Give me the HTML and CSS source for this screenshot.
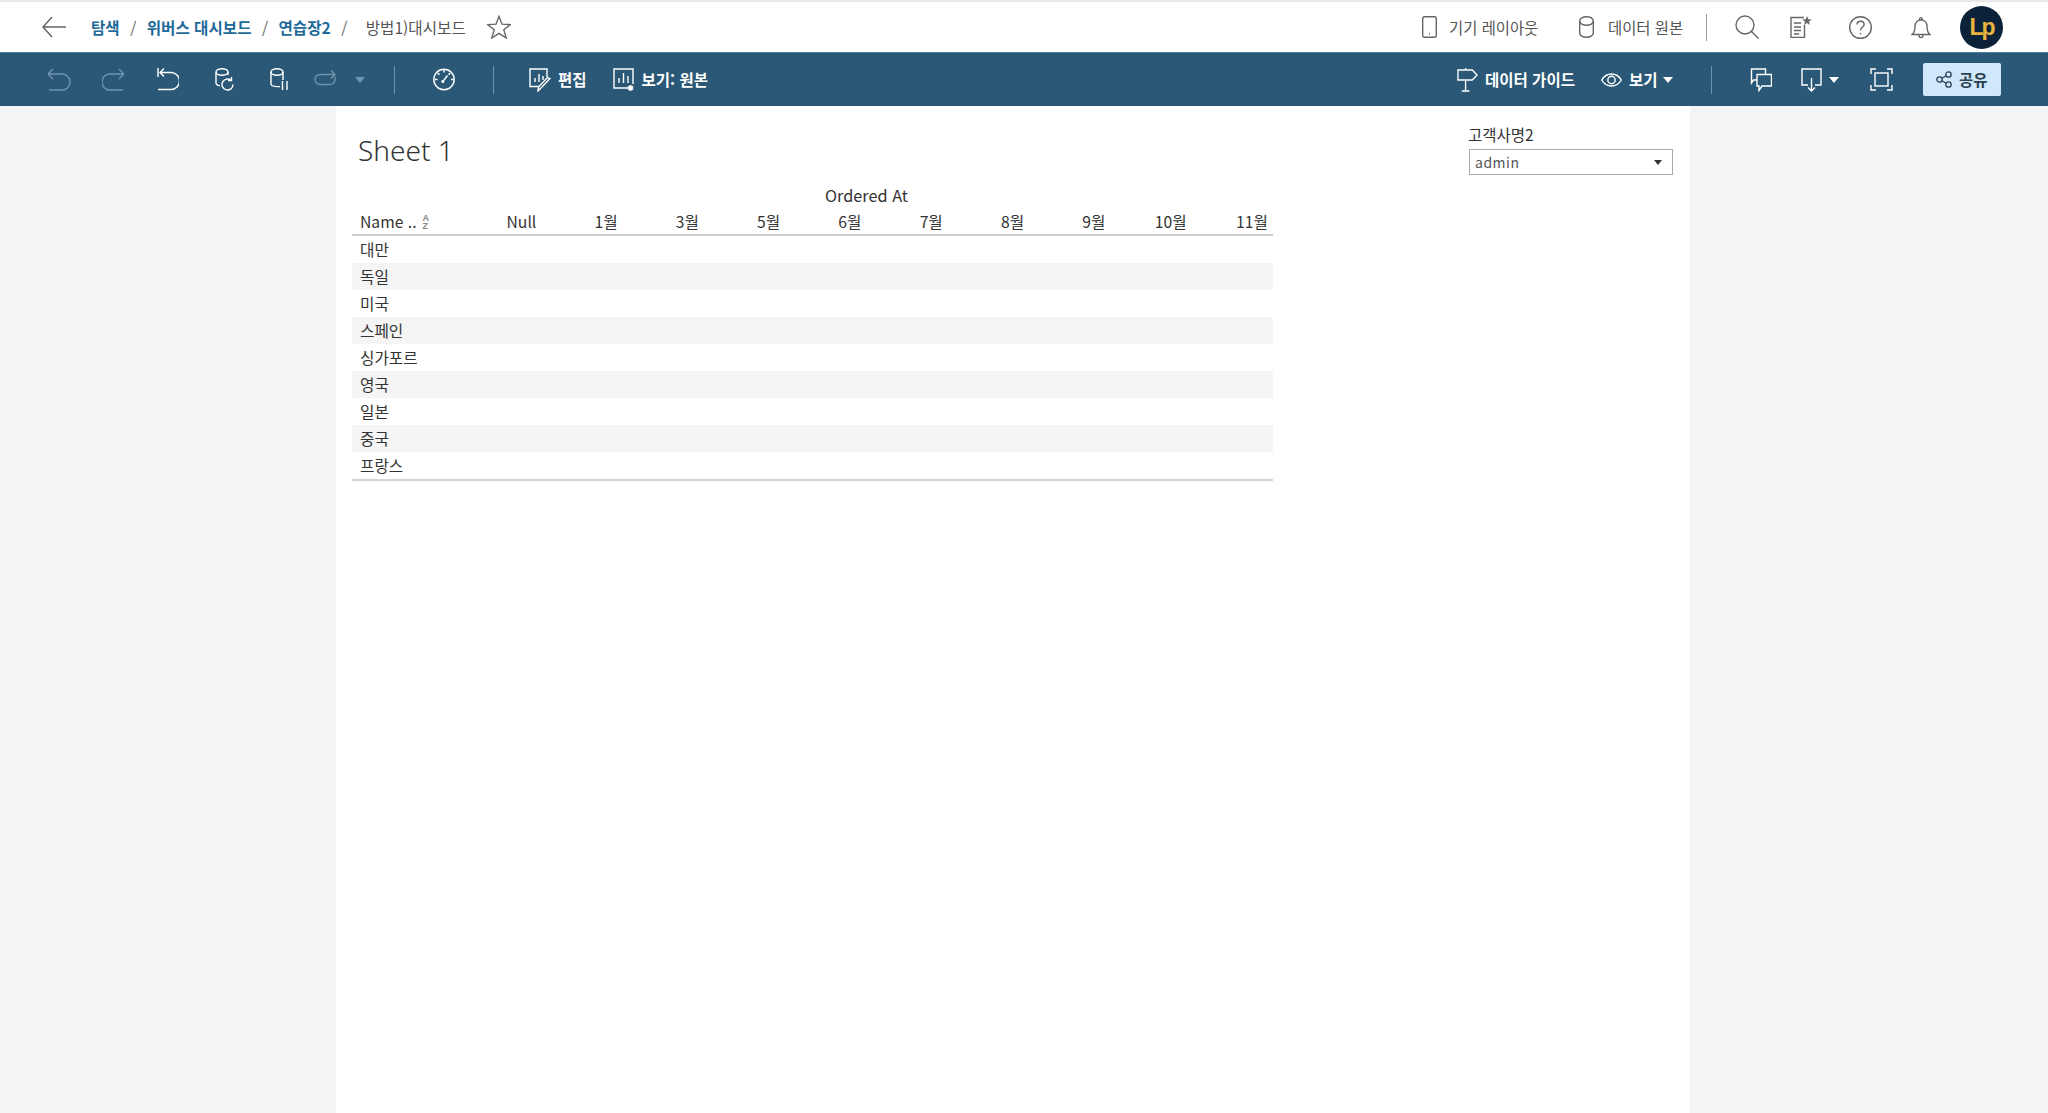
FILE: index.html
```html
<!DOCTYPE html>
<html lang="ko">
<head>
<meta charset="utf-8">
<title>방법1)대시보드</title>
<link rel="stylesheet" href="styles.css">
</head>
<body>
<header class="topbar">
  <svg class="ico arrow" width="24" height="24" viewBox="0 0 24 24"><path d="M24 12H1M10 2 1 12l9 10"/></svg>
  <nav class="crumbs">
    <a class="crumb">탐색</a><span class="slash">/</span>
    <a class="crumb">위버스 대시보드</a><span class="slash">/</span>
    <a class="crumb">연습장2</a><span class="slash">/</span>
    <span class="current">방법1)대시보드</span>
  </nav>
  <svg class="ico star" width="24" height="24" viewBox="0 0 24 26" preserveAspectRatio="none"><path d="M12 1.500l3 8.500 8.500.3-6.700 5.600 2.400 9-7.200-5-7.200 5 2.400-9L.5 10.300 9 10z"/></svg>
  <div class="top-right">
    <svg class="ico" width="15" height="22" viewBox="0 0 15 22"><rect x=".7" y=".7" width="13.600" height="20.600" rx="1.500"/><path d="M7 18h1"/></svg>
    <span class="top-label tl1">기기 레이아웃</span>
    <svg class="ico cyl" width="15" height="22" viewBox="0 0 15 22"><path d="M.7 5v12c0 2.400 3 4.300 6.800 4.300s6.800-1.900 6.800-4.300V5"/><ellipse cx="7.500" cy="5" rx="6.800" ry="4.300"/></svg>
    <span class="top-label tl2">데이터 원본</span>
    <i class="top-sep"></i>
    <svg class="ico search" width="24" height="24" viewBox="0 0 24 24"><circle cx="10" cy="10" r="9"/><path d="M16.500 16.500 23.500 23.500"/></svg>
    <svg class="ico doc" width="22" height="22" viewBox="0 0 22 22"><path d="M14 1.500H1v20h13.500V9M4 7h7M4 11h7M4 14.500h7M4 18h5"/><path class="fill" d="M17 0l1.300 3.200 3.400.2-2.700 2.200.9 3.300-2.900-1.900-2.900 1.900.9-3.300-2.700-2.200 3.400-.2z"/></svg>
    <svg class="ico help" width="23" height="23" viewBox="0 0 23 23"><circle cx="11.500" cy="11.500" r="10.800"/><path d="M8 8.500c0-2 1.600-3.300 3.600-3.300s3.500 1.300 3.500 3.200c0 2.900-3.600 2.800-3.600 6M11.500 17v1.500"/></svg>
    <svg class="ico bell" width="20" height="23" viewBox="0 0 20 23"><path d="M1 18.500c2.500-2 3-4 3-8 0-4 2.500-6.500 6-6.500s6 2.500 6 6.500c0 4 .5 6 3 8zM8.500 3.500C8.500 1 11.500 1 11.500 3.500M8 19c0 3.500 4 3.500 4 0"/></svg>
    <div class="avatar"><span class="avatar-text">Lp</span></div>
  </div>
</header>

<div class="toolbar">
  <svg class="wico dim m-undo" width="23" height="23" viewBox="0 0 23 23"><path d="M0 6h14a8 8 0 0 1 0 16H1M5 1 0 6l5 5"/></svg>
  <svg class="wico dim m-redo" width="22" height="23" viewBox="0 0 22 23"><path d="M22 6H8a8 8 0 0 0 0 16h13M17 1l5 5-5 5"/></svg>
  <svg class="wico m-rev" width="22" height="23" viewBox="0 0 22 23"><path d="M1 0v9M3 4.500h11a7.500 7.500 0 0 1 0 17H1M7 .5l-4 4 4 4"/></svg>
  <svg class="wico m-ref" width="19" height="23" viewBox="0 0 19 23"><path d="M1 4v11c0 1.500 2 2.500 4 2.700M13 4v3"/><ellipse cx="7" cy="4" rx="6" ry="3.200"/><path d="M18 16.500a5.500 5.500 0 1 1-2-4.200M16.500 9v3.500H13"/></svg>
  <svg class="wico m-pau" width="18" height="23" viewBox="0 0 18 23"><path d="M1 4v12c0 1.500 3 2.600 6 2.600h3M13 4v8"/><ellipse cx="7" cy="4" rx="6" ry="3.200"/><path d="M12.500 13v9M17 13v9"/></svg>
  <svg class="wico dim m-loop" width="22" height="23" viewBox="0 0 22 23"><path d="M21 8.500v3a5 5 0 0 1-5 5H6a5 5 0 0 1 0-10h15M17 2.500l4 4-4 4"/></svg>
  <span class="caret dimc m-car"></span>
  <i class="tsep m-s1"></i>
  <svg class="wico m-clock" width="22" height="23" viewBox="0 0 22 23"><circle cx="11" cy="11.500" r="10.200"/><path d="M11 2v2.500M2 11.500h2.500M18 11.500h2.500M4.700 5l1.800 1.800M17.300 5l-1.800 1.800M9.500 14l5-6.500"/><circle class="wfill" cx="9.800" cy="13.500" r="1.500"/></svg>
  <i class="tsep m-s2"></i>
  <svg class="wico m-edit" width="22" height="24" viewBox="0 0 22 24"><path d="M10 18.500H1V1h17v8M6 14v-4M10 14V6M14 12V8M21 10.500 12 20l-3 3 .5-4 9-9.500z"/></svg>
  <span class="tool-text m7">편집</span>
  <svg class="wico m-view" width="22" height="24" viewBox="0 0 22 24"><path d="M15 20H1V1h19v15M6 15v-5M10.500 15V5M15 15V8"/><path class="wstar" d="M17.500 17v6M14.800 18.500l5.400 3M20.200 18.500l-5.400 3"/></svg>
  <span class="tool-text m7">보기: 원본</span>

  <div class="tool-right">
    <svg class="wico" width="21" height="24" viewBox="0 0 22 24" preserveAspectRatio="none"><path d="M1 2h15l5 5-5 5H1zM9 12v11M5 23h8M9 0v2"/></svg>
    <span class="tool-text m7 tw1">데이터 가이드</span>
    <svg class="wico m-eye" width="21" height="14" viewBox="0 0 21 14"><path d="M.7 7C3 3 6.500 1 10.500 1s7.500 2 9.800 6c-2.300 4-5.800 6-9.800 6S3 11 .7 7z"/><circle cx="10.500" cy="7" r="3.700"/></svg>
    <span class="tool-text m7 tw2">보기</span>
    <span class="caret m-c2"></span>
    <i class="tsep m-s3"></i>
    <svg class="wico m-com" width="22" height="24" viewBox="0 0 22 24"><path d="M7 12H3.500L1.500 15V1h14v5"/><path d="M7 6.500h14.500V18H12l-3 4.500V18H7z"/></svg>
    <svg class="wico m-dl" width="21" height="24" viewBox="0 0 21 24"><path d="M7 17H1V1h19v16h-6M10.500 10v13M7 19.500l3.500 3.500 3.500-3.500"/></svg>
    <span class="caret m-c3"></span>
    <svg class="wico m-full" width="23" height="23" viewBox="0 0 23 23"><path d="M1 6V1h5M17 1h5v5M22 17v5h-5M6 22H1v-5"/><rect x="5" y="5" width="13" height="13"/></svg>
    <button class="share">
      <svg class="sico" width="16" height="17" viewBox="0 0 16 17"><circle cx="3.500" cy="8.500" r="2.700"/><circle cx="12.500" cy="3.500" r="2.700"/><circle cx="12.500" cy="13.500" r="2.700"/><path d="M6 7.200 10 4.800M6 9.800l4 2.400"/></svg>
      <span class="share-text">공유</span>
    </button>
  </div>
</div>

<main class="stage">
  <section class="canvas">
    <div class="sheet">
      <h1 class="title">Sheet 1</h1>
      <div class="table">
        <div class="axis-title">Ordered At</div>
        <div class="row head">
          <div class="name">Name .. <span class="sort"><span>A</span><span>Z</span></span></div>
          <div class="num">Null</div><div class="num">1월</div><div class="num">3월</div><div class="num">5월</div><div class="num">6월</div><div class="num">7월</div><div class="num">8월</div><div class="num">9월</div><div class="num">10월</div><div class="num">11월</div>
        </div>
        <div class="body">
          <div class="row">대만</div>
          <div class="row">독일</div>
          <div class="row">미국</div>
          <div class="row">스페인</div>
          <div class="row">싱가포르</div>
          <div class="row">영국</div>
          <div class="row">일본</div>
          <div class="row">중국</div>
          <div class="row">프랑스</div>
        </div>
      </div>
    </div>
    <aside class="filter">
      <div class="filter-label">고객사명2</div>
      <div class="select"><span>admin</span><span class="select-caret"></span></div>
    </aside>
  </section>
</main>
</body>
</html>
```
FILE: styles.css
```css
* { box-sizing: border-box; }
html, body { margin: 0; height: 1113px; overflow: hidden; }
body {
  display: flex;
  flex-direction: column;
  background: #f5f5f5;
  color: #333;
  font-family: "Noto Sans CJK KR", "Noto Sans", sans-serif;
}
svg { display: block; flex: none; }
.ico path, .ico rect, .ico circle, .ico ellipse { fill: none; stroke: #666; stroke-width: 1.4; }
.ico .fill { fill: #666; stroke: none; }
.wico path, .wico rect, .wico circle, .wico ellipse { fill: none; stroke: #fff; stroke-width: 1.4; }
.wico .wfill { fill: #fff; stroke: none; }
.wico .wstar { stroke-width: 1.800; }
.wico.dim path { stroke: #6f94ad; }

.topbar {
  height: 52px;
  flex: none;
  display: flex;
  align-items: center;
  padding: 0 45px 0 42px;
  background: #fff;
  border-top: 2px solid #e9e9e9;
}
.crumbs { display: flex; align-items: center; margin-left: 25px; padding-bottom: 1px; font-size: 15.600px; white-space: nowrap; }
.crumb { color: #1f6a99; font-weight: 700; }
.slash { color: #666; width: 27px; text-align: center; font-weight: 400; }
.current { color: #555; margin-left: 8px; }
.star { margin-left: 21px; }
.top-right { margin-left: auto; display: flex; align-items: center; }
.top-label { color: #555; font-size: 15.400px; margin-left: 12px; padding-bottom: 1px; white-space: nowrap; }
.tl1 { width: 88px; }
.tl2 { width: 73px; margin-left: 14px; }
.cyl { margin-left: 42px; }
.top-sep { width: 1px; height: 27px; background: #999; margin-left: 25px; }
.search { margin-left: 28px; }
.doc { margin-left: 31px; }
.help { margin-left: 37px; }
.bell { margin-left: 39px; }
.avatar {
  width: 43px; height: 43px; margin-left: 29px;
  border-radius: 50%;
  background: #0b2239;
  display: flex; align-items: center; justify-content: center;
}
.avatar-text { color: #e8b33d; font: 700 23px "Liberation Sans", sans-serif; letter-spacing: -2px; }

.toolbar {
  height: 54px;
  flex: none;
  display: flex;
  align-items: center;
  padding: 0 47px 0 48px;
  background: #2b5876;
  border-top: 1px solid #4d7b9a;
  color: #fff;
}
.tool-text { font-size: 15.500px; font-weight: 700; white-space: nowrap; padding-bottom: 2px; }
.m7 { margin-left: 7px; }
.tw1 { width: 90px; }
.tw2 { width: 28px; }
.tool-right { margin-left: auto; display: flex; align-items: center; }
.tsep { width: 1px; height: 28px; background: #6f94ad; }
.caret { width: 0; height: 0; border-left: 5px solid transparent; border-right: 5px solid transparent; border-top: 6px solid #fff; }
.dimc { border-top-color: #6f94ad; }
.m-redo { margin-left: 31px; }
.m-rev { margin-left: 33px; }
.m-ref { margin-left: 36px; }
.m-pau { margin-left: 36px; }
.m-loop { margin-left: 26px; }
.m-car { margin-left: 19px; }
.m-s1 { margin-left: 29px; }
.m-clock { margin-left: 38px; }
.m-s2 { margin-left: 38px; }
.m-edit { margin-left: 35px; }
.m-view { margin-left: 26px; }
.m-eye { margin-left: 26px; }
.m-c2 { margin-left: 6px; }
.m-s3 { margin-left: 38px; }
.m-com { margin-left: 38px; }
.m-dl { margin-left: 29px; }
.m-c3 { margin-left: 7px; }
.m-full { margin-left: 31px; }
.share {
  width: 78px; height: 33px; margin-left: 30px;
  display: flex; align-items: center; gap: 7px;
  padding: 0 0 0 13px;
  border: 0; border-radius: 2px;
  background: #cfe8fb;
  color: #2b3f4e;
  font: 700 15.500px "Noto Sans CJK KR", sans-serif;
}
.share-text { padding-bottom: 2px; }
.sico circle, .sico path { fill: none; stroke: #2b3f4e; stroke-width: 1.3; }

.stage { flex: 1; display: flex; padding-left: 336px; }
.canvas { width: 1354px; background: #fff; display: flex; justify-content: space-between; padding: 0 17px 0 16px; }
.sheet { width: 921px; }
.title { margin: 25px 0 0 6px; font-size: 28px; line-height: 38px; font-weight: 300; font-family: "Noto Sans", sans-serif; color: #333; }
.table { margin-top: 16px; font-size: 15.700px; color: #333; }
.axis-title { padding-left: 108px; text-align: center; line-height: 20px; height: 24px; font-size: 16.300px; }
.row {
  display: grid;
  grid-template-columns: 100px repeat(10, 81.300px);
  align-items: center;
  height: 27px;
  padding-left: 8px;
  white-space: nowrap;
}
.head { height: 27px; border-bottom: 2px solid #ccc; }
.body .row { display: flex; }
.body .row:nth-child(even) { background: #f5f5f5; }
.body { border-bottom: 2px solid #d4d4d4; }
.name { display: flex; align-items: center; gap: 6px; }
.num { text-align: right; padding-right: 5px; }
.sort { display: flex; flex-direction: column; color: #888; font: 700 9px/8px "Liberation Sans", sans-serif; }

.filter { width: 204px; padding-top: 17px; }
.filter-label { font-size: 15.500px; line-height: 22px; margin-left: -1px; color: #333; }
.select {
  height: 26px; margin-top: 4px;
  display: flex; align-items: center; justify-content: space-between;
  padding: 0 10px 0 5px;
  border: 1px solid #aaa;
  font-size: 14px; letter-spacing: .5px; color: #555;
}
.select-caret { width: 0; height: 0; border-left: 4px solid transparent; border-right: 4px solid transparent; border-top: 5px solid #333; }
```
